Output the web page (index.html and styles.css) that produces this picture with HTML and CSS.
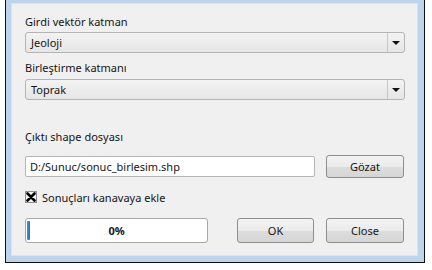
FILE: index.html
```html
<!DOCTYPE html>
<html lang="tr">
<head>
  <meta charset="UTF-8">
  <title>Birleştir</title>
  <link rel="stylesheet" href="styles.css">
</head>
<body>
  <div class="window">
    <div class="panel">
      <div class="label">Girdi vektör katman</div>
      <div class="combo">
        <span class="combo-text">Jeoloji</span>
        <span class="combo-arrow"><span class="tri"></span></span>
      </div>

      <div class="label label-second">Birleştirme katmanı</div>
      <div class="combo">
        <span class="combo-text">Toprak</span>
        <span class="combo-arrow"><span class="tri"></span></span>
      </div>

      <div class="label label-output">Çıktı shape dosyası</div>
      <div class="row file-row">
        <div class="line-edit">D:/Sunuc/sonuc_birlesim.shp</div>
        <button class="btn">Gözat</button>
      </div>

      <div class="check-row">
        <span class="checkbox">
          <svg width="10" height="10" viewBox="0 0 10 10">
            <path d="M1.5 1.5 L8.5 8.5 M8.5 1.5 L1.5 8.5" stroke="#000" stroke-width="2.6" stroke-linecap="round"/>
          </svg>
        </span>
        <span class="check-label">Sonuçları kanavaya ekle</span>
      </div>

      <div class="row bottom-row">
        <div class="progress">
          <span class="chunk"></span>
          <span class="progress-text">0%</span>
        </div>
        <button class="btn btn-ok">OK</button>
        <button class="btn">Close</button>
      </div>
    </div>
  </div>
</body>
</html>
```

FILE: styles.css
```css
* {
  margin: 0;
  padding: 0;
  box-sizing: border-box;
}

body {
  background-color: #ffffff;
  font-family: "Noto Sans", "DejaVu Sans", sans-serif;
  font-size: 11px;
  color: #151515;
}

.window {
  margin-left: 5px;
  width: 420px;
  height: 263px;
  background-color: #bcd4ec;
  border: 1px solid #111111;
  border-top: none;
  padding: 3px 6px 6px 5px;
}

.panel {
  height: 100%;
  background-color: #f0f0f0;
  border: 1px solid #d9e4ef;
  padding: 10px 12px 0 13px;
}

.label {
  height: 15px;
  line-height: 15px;
  margin-bottom: 3px;
}

.label-second {
  margin-top: 7px;
  margin-bottom: 4px;
}

.label-output {
  margin-top: 29px;
  margin-bottom: 11px;
}

.combo {
  display: flex;
  height: 21px;
  border: 1px solid #b4b4b4;
  border-radius: 3px;
  background: linear-gradient(#f3f3f3, #e6e6e6);
}

.combo-text {
  flex-grow: 1;
  padding-left: 5px;
  line-height: 19px;
}

.combo-arrow {
  width: 17px;
  border-left: 1px solid #c6c6c6;
  display: flex;
  align-items: center;
  justify-content: center;
}

.tri {
  width: 0;
  height: 0;
  border-left: 4px solid transparent;
  border-right: 4px solid transparent;
  border-top: 4px solid #111111;
  margin-top: 1px;
}

.row {
  display: flex;
  align-items: center;
}

.file-row {
  height: 23px;
}

.line-edit {
  width: 290px;
  height: 21px;
  line-height: 19px;
  padding-left: 4px;
  background-color: #ffffff;
  border: 1px solid #b5b5b5;
  border-radius: 2px;
  margin-right: 11px;
}

.btn {
  width: 78px;
  height: 23px;
  font-family: inherit;
  font-size: 11px;
  color: #151515;
  border: 1px solid #8e8e8e;
  border-radius: 3px;
  background: linear-gradient(#f3f3f3 0%, #ebebeb 50%, #dddddd 51%, #d6d6d6 100%);
}

.check-row {
  display: flex;
  align-items: center;
  height: 14px;
  margin-top: 12px;
}

.checkbox {
  width: 12px;
  height: 12px;
  border: 1px solid #8f8f8f;
  background-color: #f6f6f6;
  display: flex;
  margin-right: 5px;
}

.progress-text {
  font-weight: bold;
}

.bottom-row {
  margin-top: 14px;
  height: 25px;
}

.bottom-row .btn {
  height: 25px;
}

.btn-ok {
  width: 77px;
  margin-left: 29px;
  margin-right: 12px;
}

.progress {
  position: relative;
  width: 183px;
  height: 25px;
  border: 1px solid #a8a8a8;
  border-radius: 3px;
  background-color: #ffffff;
  display: flex;
  align-items: center;
  justify-content: center;
}

.chunk {
  position: absolute;
  left: 1px;
  top: 2px;
  bottom: 2px;
  width: 3px;
  border-radius: 1px;
  background: linear-gradient(90deg, #4a90d0, #2b6fb5);
}
```
